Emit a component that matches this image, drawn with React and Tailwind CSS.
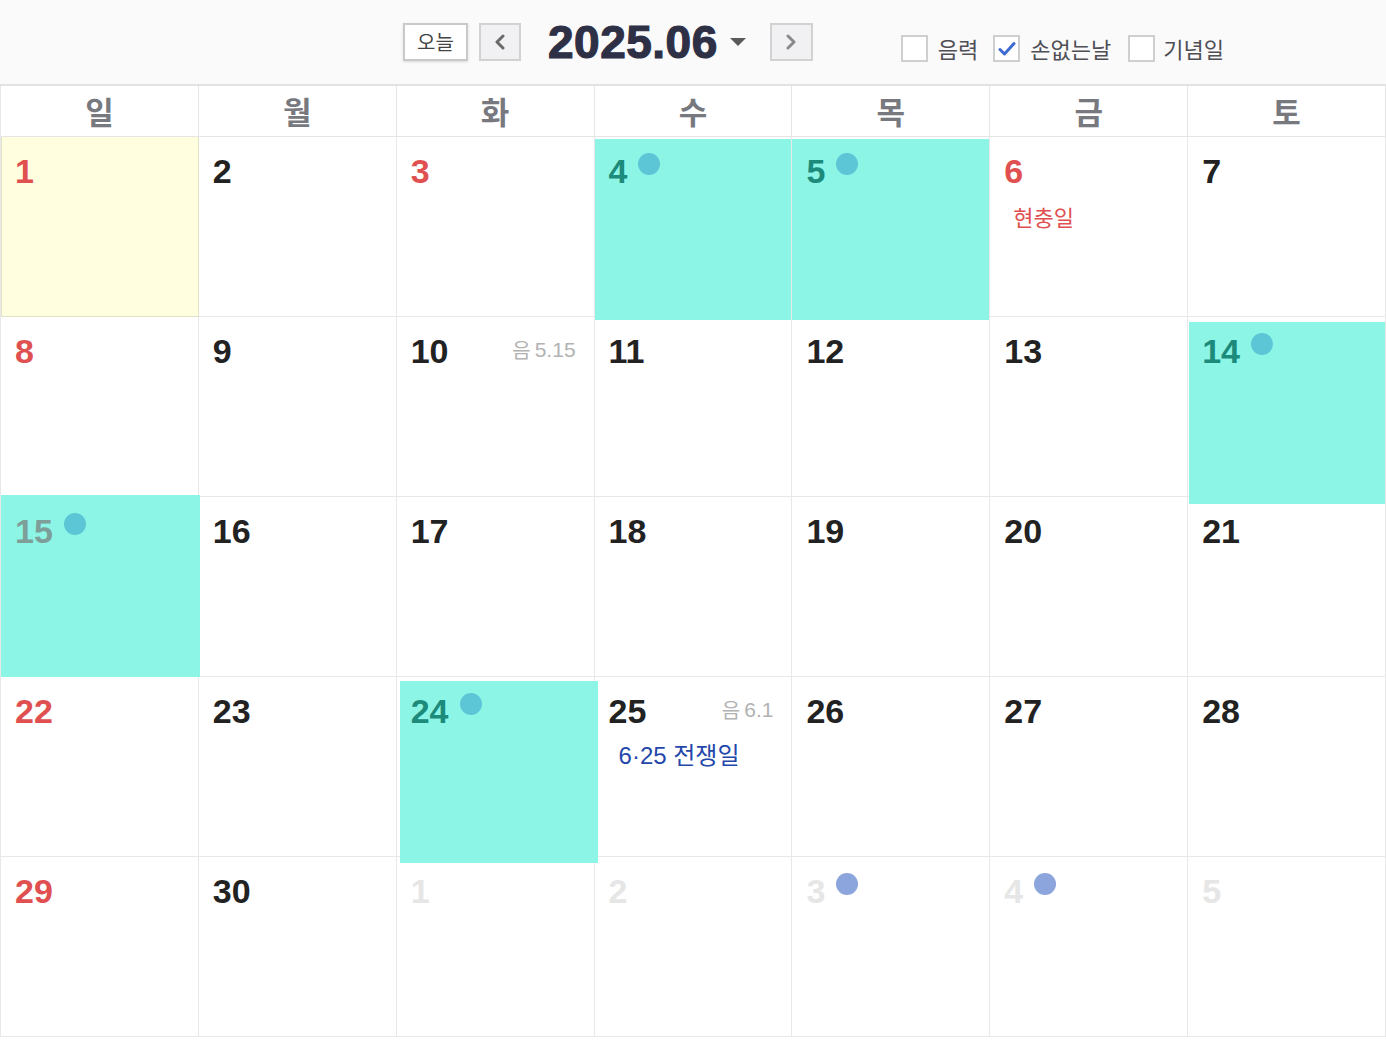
import React from "react";

const KO = { fontFamily: '"Noto Sans CJK KR", "Noto Sans", sans-serif' };
const NUM = { fontFamily: '"Liberation Sans", "Noto Sans CJK KR", sans-serif' };

const weekdays = ["일", "월", "화", "수", "목", "금", "토"];

// tone: red | dark | teal | fade | other
const cells = [
  { d: 1, tone: "red", today: true },
  { d: 2, tone: "dark" },
  { d: 3, tone: "red" },
  { d: 4, tone: "teal", dot: "teal", hl: "top-[2px] -bottom-[4px]" },
  { d: 5, tone: "teal", dot: "teal", hl: "top-[2px] -bottom-[4px]" },
  { d: 6, tone: "red", holiday: "현충일" },
  { d: 7, tone: "dark" },
  { d: 8, tone: "red" },
  { d: 9, tone: "dark" },
  { d: 10, tone: "dark", lunar: "5.15" },
  { d: 11, tone: "dark" },
  { d: 12, tone: "dark" },
  { d: 13, tone: "dark" },
  { d: 14, tone: "teal", dot: "teal", hl: "top-[5px] -bottom-[8px] left-[1px]" },
  { d: 15, tone: "fade", dot: "teal", hl: "-top-[2px] -bottom-[1px] -right-[2px]" },
  { d: 16, tone: "dark" },
  { d: 17, tone: "dark" },
  { d: 18, tone: "dark" },
  { d: 19, tone: "dark" },
  { d: 20, tone: "dark" },
  { d: 21, tone: "dark" },
  { d: 22, tone: "red" },
  { d: 23, tone: "dark" },
  { d: 24, tone: "teal", dot: "teal", hl: "top-[4px] -bottom-[7px] left-[3px] -right-[4px]" },
  { d: 25, tone: "dark", lunar: "6.1", memo: "6·25 전쟁일" },
  { d: 26, tone: "dark" },
  { d: 27, tone: "dark" },
  { d: 28, tone: "dark" },
  { d: 29, tone: "red" },
  { d: 30, tone: "dark" },
  { d: 1, tone: "other" },
  { d: 2, tone: "other" },
  { d: 3, tone: "other", dot: "blue" },
  { d: 4, tone: "other", dot: "blue" },
  { d: 5, tone: "other" },
];

const toneClass = {
  red: "text-[#e05050]",
  dark: "text-[#222222]",
  teal: "text-[#1c8b7b]",
  fade: "text-[#7e9f99]",
  other: "text-[#e6e6e6]",
};

function Checkbox({ checked }) {
  return (
    <span className="w-[27px] h-[27px] border-2 border-[#cfcfcf] bg-white flex items-center justify-center">
      {checked && (
        <svg width="18" height="16" viewBox="0 0 18 16">
          <path d="M2 8.5 L6.5 13 L16 2.5" fill="none" stroke="#3d6bd0" strokeWidth="3" strokeLinecap="round" strokeLinejoin="round" />
        </svg>
      )}
    </span>
  );
}

function Header() {
  return (
    <div className="h-[86px] bg-[#fafafb] border-b-2 border-[#e3e3e3] flex items-center pl-[403px]">
      <button
        className="w-[65px] h-[38px] bg-white border-2 border-[#c9c9c9] text-[20px] text-[#444] flex items-center justify-center shadow-sm"
        style={KO}
      >
        오늘
      </button>
      <button className="ml-[11px] w-[42px] h-[38px] bg-[#f1f1f3] border-2 border-[#d2d2d2] flex items-center justify-center">
        <svg width="12" height="16" viewBox="0 0 12 16">
          <path d="M9 2 L3 8 L9 14" fill="none" stroke="#6a6a6a" strokeWidth="3" strokeLinecap="round" strokeLinejoin="round" />
        </svg>
      </button>
      <div
        className="ml-[27px] text-[46px] font-bold text-[#2e3046] leading-none tracking-[0.5px] [-webkit-text-stroke:1.2px_#2e3046]"
        style={NUM}
      >
        2025.06
      </div>
      <svg className="ml-[12px]" width="16" height="9" viewBox="0 0 16 9">
        <path d="M0 0 L16 0 L8 8 Z" fill="#5a5a5a" />
      </svg>
      <button className="ml-[24px] w-[43px] h-[38px] bg-[#f1f1f3] border-2 border-[#d2d2d2] flex items-center justify-center">
        <svg width="12" height="16" viewBox="0 0 12 16">
          <path d="M3 2 L9 8 L3 14" fill="none" stroke="#8a8a8a" strokeWidth="3" strokeLinecap="round" strokeLinejoin="round" />
        </svg>
      </button>
      <div className="ml-[88px] pt-[13px] flex items-center text-[22px] text-[#4f4f55]" style={KO}>
        <Checkbox />
        <span className="ml-[10px]">음력</span>
        <span className="ml-[15px]"><Checkbox checked /></span>
        <span className="ml-[10px]">손없는날</span>
        <span className="ml-[17px]"><Checkbox /></span>
        <span className="ml-[8px]">기념일</span>
      </div>
    </div>
  );
}

function DayCell({ c }) {
  return (
    <div
      className={
        "relative h-[180px] border-r border-b " +
        (c.today ? "bg-[#ffffe0] border-[#e2e2c6] border-l" : "bg-white border-[#e8e8e8]")
      }
    >
      {c.hl && <div className={"absolute z-[1] inset-x-0 bg-[#8df5e6] " + c.hl} />}
      <div className={"relative z-10 flex items-start pt-[17px] pr-[18px] " + (c.today ? "pl-[13px]" : "pl-[14px]")}>
        <span className={"text-[34px] font-bold leading-[34px] " + toneClass[c.tone]} style={NUM}>
          {c.d}
        </span>
        {c.dot && (
          <span
            className={
              "ml-[11px] -mt-[1px] w-[22px] h-[22px] rounded-full " +
              (c.dot === "teal" ? "bg-[#5cc6d6]" : "bg-[#8ca5dc]")
            }
          />
        )}
        {c.lunar && (
          <span className="ml-auto mt-[5px] text-[21px] text-[#b2b2b2] leading-none flex items-center gap-[4px]">
            <span style={KO} className="text-[20px]">음</span>
            <span style={NUM}>{c.lunar}</span>
          </span>
        )}
      </div>
      {c.holiday && (
        <div className="relative z-10 pl-[23px] mt-[17px] text-[22px] text-[#e05050] leading-none" style={KO}>
          {c.holiday}
        </div>
      )}
      {c.memo && (
        <div className="relative z-10 pl-[24px] mt-[16px] text-[24px] text-[#2447aa] leading-none" style={NUM}>
          {c.memo}
        </div>
      )}
    </div>
  );
}

export default function App() {
  return (
    <div className="w-[1386px] h-[1040px] bg-white overflow-hidden">
      <Header />
      <div className="grid grid-cols-7 border-l border-[#e8e8e8]">
        {weekdays.map((w) => (
          <div
            key={w}
            className="h-[51px] border-r border-b border-[#e5e5e5] flex items-center justify-center text-[31px] font-bold text-[#77797f]"
            style={KO}
          >
            {w}
          </div>
        ))}
        {cells.map((c, i) => (
          <DayCell key={i} c={c} />
        ))}
      </div>
    </div>
  );
}
